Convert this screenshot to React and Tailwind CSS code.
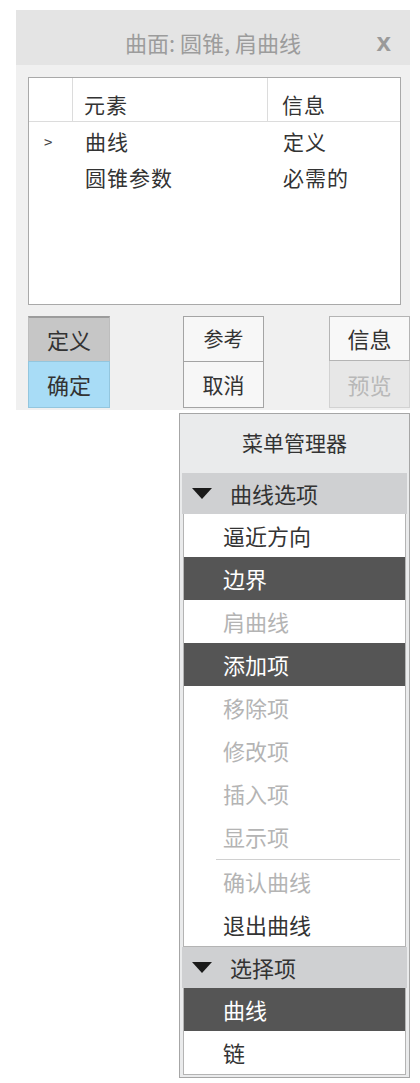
import React from "react";

const F = { fontFamily: '"Noto Sans CJK SC", "Noto Sans", sans-serif' };

function Tri() {
  return (
    <svg width="20" height="11" viewBox="0 0 20 11" className="shrink-0">
      <polygon points="0,0 20,0 10,11" fill="#1a1a1a" />
    </svg>
  );
}

function Item({ label, kind }) {
  const cls =
    kind === "dark"
      ? "bg-[#555555] text-white"
      : kind === "dis"
      ? "text-[#b4b4b4]"
      : "text-[#333333]";
  return (
    <div className={`h-[43px] flex items-center pl-[39px] text-[22px] ${cls}`}>{label}</div>
  );
}

function Header({ label }) {
  return (
    <div className="h-[41px] flex items-center bg-[#cfd0d2] pl-[10px] gap-[18px] text-[22px] text-[#333333]">
      <Tri />
      <span>{label}</span>
    </div>
  );
}

export default function App() {
  return (
    <div className="bg-white min-h-[1083px] w-[420px] pt-[10px] pl-[16px]" style={F}>
      {/* dialog panel */}
      <div className="w-[394px] bg-[#f0f0f0] pb-[2px]">
        <div className="relative h-[55px] bg-[#e4e4e4] flex items-center justify-center pt-[9px]">
          <span className="text-[22px] text-[#9c9c9c]">曲面: 圆锥, 肩曲线</span>
          <span
            className="absolute right-[19px] top-[19px] text-[26px] font-bold text-[#9a9a9a] leading-none"
            style={{ fontFamily: '"Liberation Sans", sans-serif' }}
          >
            x
          </span>
        </div>
        <div className="pl-[12px] pt-[12px]">
          <div className="w-[373px] h-[228px] bg-white border border-[#a9a9a9] text-[21px] text-[#333333] tracking-[1px]">
            <div className="flex h-[44px] border-b border-[#dcdcdc]">
              <div className="w-[44px] border-r border-[#dcdcdc]" />
              <div className="w-[195px] border-r border-[#dcdcdc] pl-[11px] flex items-end pb-[1px]">元素</div>
              <div className="pl-[14px] flex items-end pb-[1px]">信息</div>
            </div>
            <div className="flex flex-col pt-[2px]">
              <div className="flex h-[36px] items-center">
                <div className="w-[45px] pl-[15px] text-[15px] text-[#444]">&gt;</div>
                <div className="w-[195px] pl-[11px]">曲线</div>
                <div className="pl-[14px]">定义</div>
              </div>
              <div className="flex h-[36px] items-center">
                <div className="w-[45px]" />
                <div className="w-[195px] pl-[11px]">圆锥参数</div>
                <div className="pl-[14px]">必需的</div>
              </div>
            </div>
          </div>
          <div className="flex mt-[11px] text-[22px] text-[#333333]">
            <div className="w-[82px] flex flex-col">
              <div className="h-[45px] bg-[#c6c6c6] border-t-2 border-[#9c9c9c] border-x border-x-[#bdbdbd] flex items-center justify-center">定义</div>
              <div className="h-[47px] bg-[#a8dcf6] border border-[#93c6de] flex items-center justify-center">确定</div>
            </div>
            <div className="w-[81px] ml-[73px] flex flex-col">
              <div className="h-[46px] bg-[#f7f7f7] border border-[#a4a4a4] flex items-center justify-center text-[20px]">参考</div>
              <div className="h-[46px] bg-[#f7f7f7] border border-t-0 border-[#a4a4a4] flex items-center justify-center text-[21px]">取消</div>
            </div>
            <div className="w-[81px] ml-[65px] flex flex-col">
              <div className="h-[45px] bg-[#f8f8f8] border border-[#b4b4b4] flex items-center justify-center">信息</div>
              <div className="h-[47px] bg-[#e7e7e7] border border-t-0 border-[#d2d2d2] flex items-center justify-center text-[#b8b8b8]">预览</div>
            </div>
          </div>
        </div>
      </div>

      {/* menu manager */}
      <div className="ml-[163px] mt-[3px] w-[231px] border border-[#a6a6a6] bg-[#eaebec] px-[2px] pb-[2px]">
        <div className="h-[59px] flex items-center justify-center text-[21px] text-[#333333] pb-[2px]">菜单管理器</div>
        <Header label="曲线选项" />
        <div className="bg-white border-x border-b border-[#b4b4b4] mx-[1px]">
          <Item label="逼近方向" />
          <Item label="边界" kind="dark" />
          <Item label="肩曲线" kind="dis" />
          <Item label="添加项" kind="dark" />
          <Item label="移除项" kind="dis" />
          <Item label="修改项" kind="dis" />
          <Item label="插入项" kind="dis" />
          <Item label="显示项" kind="dis" />
          <div className="h-[1px] bg-[#d0d0d0] ml-[32px] mr-[5px] mt-[1px]" />
          <Item label="确认曲线" kind="dis" />
          <Item label="退出曲线" />
        </div>
        <Header label="选择项" />
        <div className="bg-white border-x border-b border-[#b4b4b4] mx-[1px]">
          <Item label="曲线" kind="dark" />
          <Item label="链" />
        </div>
      </div>
    </div>
  );
}
